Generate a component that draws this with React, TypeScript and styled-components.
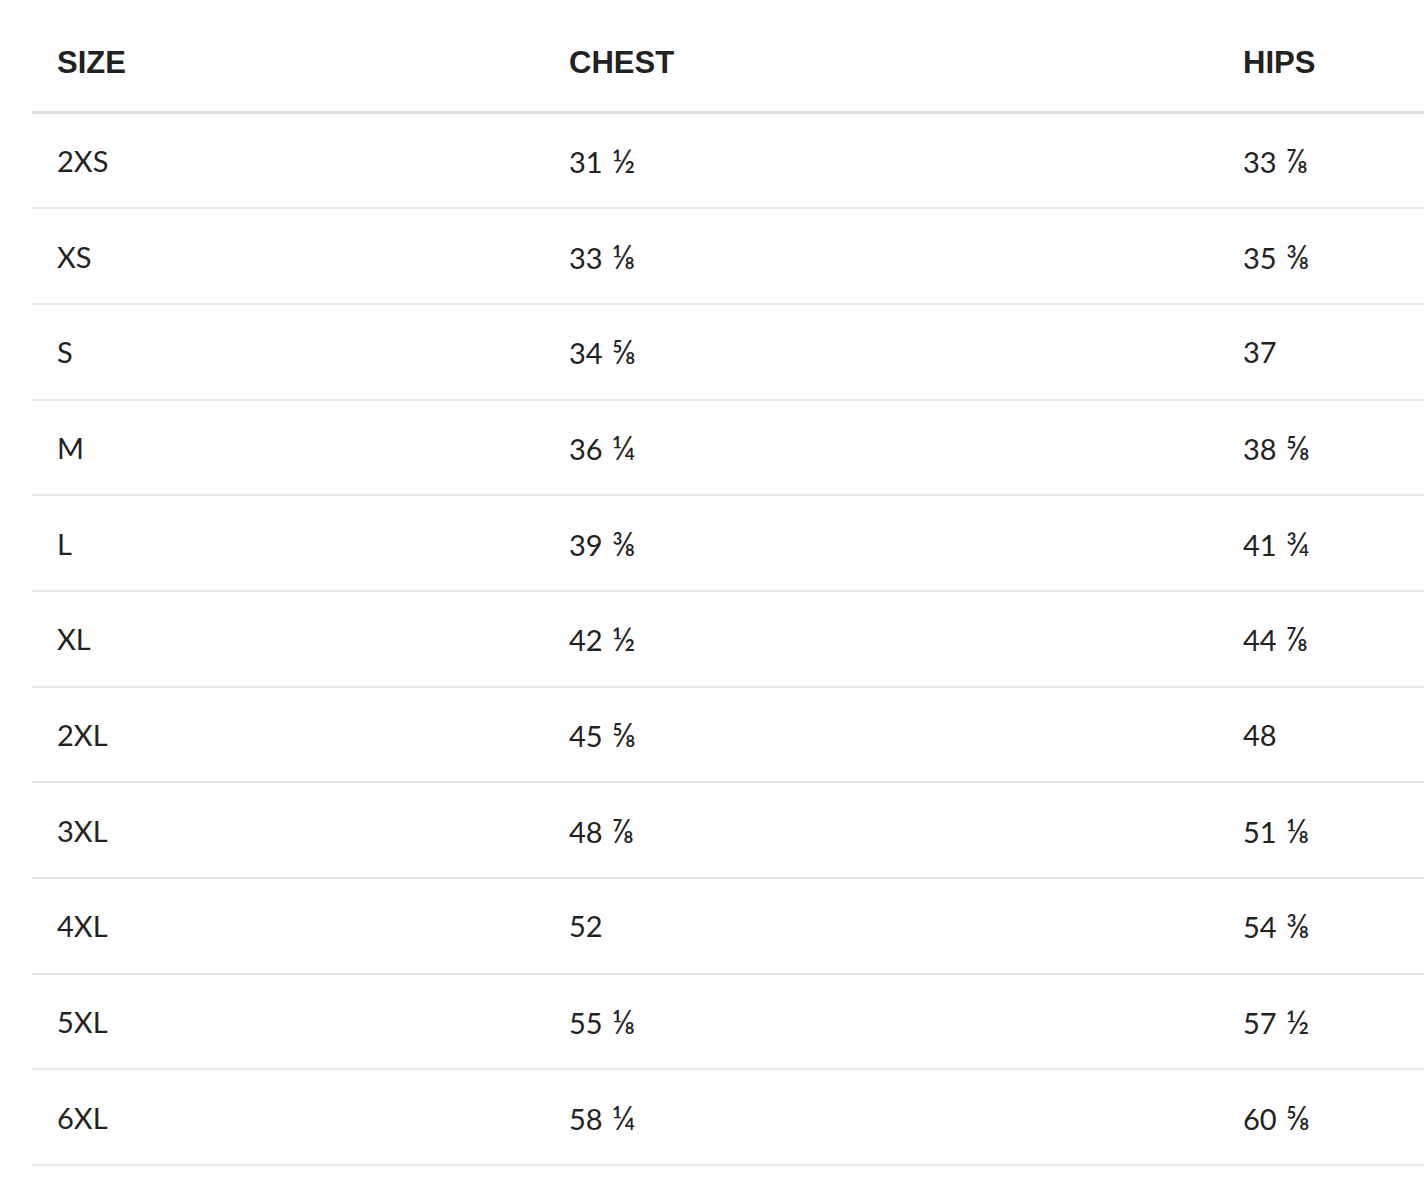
import React from 'react'
import styled, { createGlobalStyle } from 'styled-components'

const GlobalStyle = createGlobalStyle`
  html, body {
    margin: 0;
    padding: 0;
    background: #fff;
    overflow: hidden;
  }
`

const Page = styled.div`
  padding: 16px 0 0 32px;
  width: 1500px;
  font-family: Lato, "Liberation Sans", sans-serif;
  color: #222;
`

const Table = styled.table`
  width: 1500px;
  border-collapse: collapse;
  table-layout: fixed;
`

const HeadCell = styled.th<{ $w?: number }>`
  box-sizing: border-box;
  width: ${p => (p.$w ? p.$w + 'px' : 'auto')};
  height: 96px;
  padding: 0 0 0 25px;
  text-align: left;
  font-family: "Liberation Sans", Arial, sans-serif;
  font-weight: 700;
  font-size: 31px;
  color: #222;
  border-bottom: 3px solid #dedede;
  vertical-align: middle;
`

const Row = styled.tr`
  border-bottom: 2px solid #e6e6e6;
`

const Cell = styled.td`
  height: 93.7px;
  padding: 0 0 0 25px;
  font-size: 29px;
  vertical-align: middle;
`

const Frac = styled.span`
  font-size: 32px;
  margin-left: 2px;
  letter-spacing: 1px;
`

const Value = ({ v }: { v: string }) => {
  const [whole, frac] = v.split(' ')
  return (
    <>
      {whole}
      {frac ? ' ' : null}
      {frac ? <Frac>{frac}</Frac> : null}
    </>
  )
}

const rows = [
  ['2XS', '31 ½', '33 ⅞'],
  ['XS', '33 ⅛', '35 ⅜'],
  ['S', '34 ⅝', '37'],
  ['M', '36 ¼', '38 ⅝'],
  ['L', '39 ⅜', '41 ¾'],
  ['XL', '42 ½', '44 ⅞'],
  ['2XL', '45 ⅝', '48'],
  ['3XL', '48 ⅞', '51 ⅛'],
  ['4XL', '52', '54 ⅜'],
  ['5XL', '55 ⅛', '57 ½'],
  ['6XL', '58 ¼', '60 ⅝'],
]

export default function App() {
  return (
    <Page>
      <GlobalStyle />
      <Table>
        <thead>
          <tr>
            <HeadCell $w={512}>SIZE</HeadCell>
            <HeadCell $w={674}>CHEST</HeadCell>
            <HeadCell>HIPS</HeadCell>
          </tr>
        </thead>
        <tbody>
          {rows.map(r => (
            <Row key={r[0]}>
              <Cell>{r[0]}</Cell>
              <Cell><Value v={r[1]} /></Cell>
              <Cell><Value v={r[2]} /></Cell>
            </Row>
          ))}
        </tbody>
      </Table>
    </Page>
  )
}
